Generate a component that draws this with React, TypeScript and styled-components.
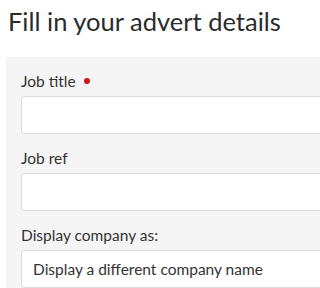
import React from 'react';
import styled, { createGlobalStyle } from 'styled-components';

const GlobalStyle = createGlobalStyle`
  html, body {
    margin: 0;
    padding: 0;
    overflow: hidden;
    background: #ffffff;
  }
  body {
    font-family: "Lato", "Noto Sans", sans-serif;
    color: #333333;
  }
`;

const Page = styled.div`
  width: 420px;
  padding-top: 6px;
`;

const Title = styled.h1`
  margin: 0 0 21px 8px;
  font-size: 25.5px;
  line-height: 30px;
  font-weight: 400;
  color: #2b2b2b;
`;

const Panel = styled.section`
  margin-left: 6px;
  background: #f5f5f5;
  padding: 13px 0 20px 15px;
  display: flex;
  flex-direction: column;
  gap: 13px;
`;

const Field = styled.div`
  display: flex;
  flex-direction: column;
  gap: 4px;
`;

const Label = styled.label`
  font-size: 15.5px;
  line-height: 22px;
  color: #333333;
  display: flex;
  align-items: center;
  gap: 8px;
`;

const Required = styled.span`
  width: 6px;
  height: 6px;
  border-radius: 50%;
  background: #c8161d;
`;

const TextInput = styled.input`
  box-sizing: border-box;
  height: 38px;
  width: 400px;
  border: 1px solid #dcdcdc;
  border-radius: 3px;
  background: #ffffff;
  font: inherit;
  padding: 0 11px;
  outline: none;
`;

const Select = styled.div`
  box-sizing: border-box;
  height: 38px;
  width: 400px;
  border: 1px solid #dcdcdc;
  border-radius: 3px;
  background: #ffffff;
  font-size: 15.5px;
  padding: 0 11px;
  display: flex;
  align-items: center;
  color: #333333;
`;

const App = () => {
  return (
    <Page>
      <GlobalStyle />
      <Title>Fill in your advert details</Title>
      <Panel>
        <Field>
          <Label>
            Job title <Required />
          </Label>
          <TextInput type="text" />
        </Field>
        <Field>
          <Label>Job ref</Label>
          <TextInput type="text" />
        </Field>
        <Field>
          <Label>Display company as:</Label>
          <Select>Display a different company name</Select>
        </Field>
      </Panel>
    </Page>
  );
};

export default App;
